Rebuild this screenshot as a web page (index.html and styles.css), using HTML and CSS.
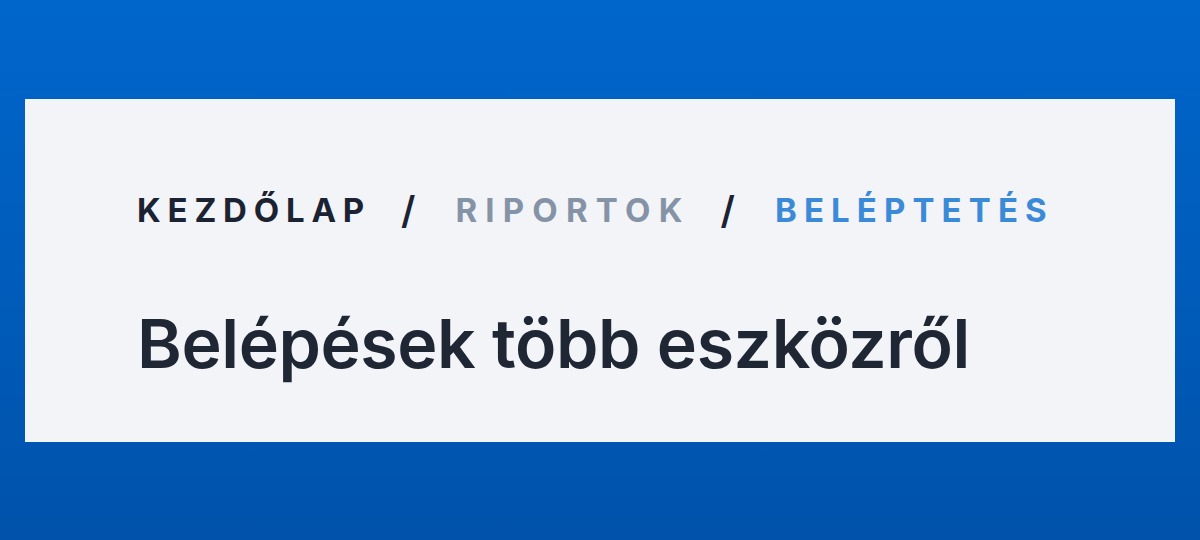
FILE: index.html
```html
<!DOCTYPE html>
<html lang="hu">
<head>
<meta charset="utf-8">
<title>Belépések több eszközről</title>
<link rel="stylesheet" href="styles.css">
</head>
<body>
  <main class="stage">
    <section class="card">
      <nav class="crumbs">
        <span class="crumb crumb-home">KEZDŐLAP</span>
        <span class="sep">/</span>
        <span class="crumb crumb-mid">RIPORTOK</span>
        <span class="sep">/</span>
        <span class="crumb crumb-current">BELÉPTETÉS</span>
      </nav>
      <h1 class="title">Belépések több eszközről</h1>
    </section>
  </main>
</body>
</html>
```
FILE: styles.css
```css
* { box-sizing: border-box; }

html, body {
  margin: 0;
  height: 100%;
}

body {
  font-family: "Inter", "Noto Sans", sans-serif;
  background: linear-gradient(180deg, #0066cc 0%, #0052aa 100%);
}

.stage {
  width: 1200px;
  height: 540px;
  padding: 99px 25px 0 25px;
}

.card {
  background: #f3f4f8;
  height: 343px;
  padding: 89px 0 0 112px;
}

.crumbs {
  display: flex;
  align-items: center;
  gap: 30px;
  font-size: 33px;
  font-weight: 700;
  letter-spacing: 6.8px;
  line-height: 44px;
}

.crumb-home { color: #1b2332; }
.crumb-mid { color: #8593a6; letter-spacing: 8.2px; }
.crumb-current { color: #3a8ad8; letter-spacing: 7.1px; }

.sep {
  color: #1b2332;
  letter-spacing: 0;
  font-size: 38px;
  font-weight: 600;
  margin-right: 10px;
}

.title {
  margin: 71px 0 0 0;
  font-size: 68px;
  font-weight: 600;
  line-height: 80px;
  color: #1f2634;
  letter-spacing: -0.4px;
}
```
